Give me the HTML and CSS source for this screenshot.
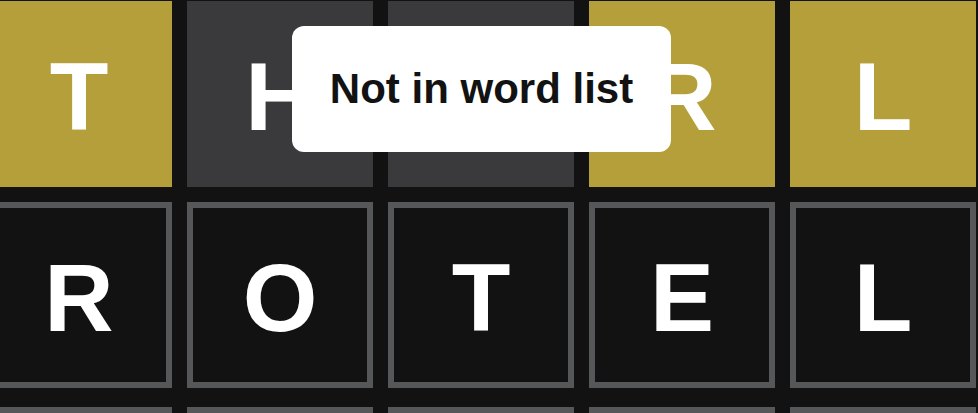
FILE: index.html
```html
<!DOCTYPE html>
<html lang="en">
  <head>
    <meta charset="UTF-8" />
    <meta name="viewport" content="width=device-width, initial-scale=1.0" />
    <title>Wordle</title>
    <link rel="stylesheet" href="styles.css">
  </head>
  <body>
    <div class="board">
      <div class="row">
        <div class="tile present">T</div>
        <div class="tile absent">H</div>
        <div class="tile absent">I</div>
        <div class="tile present">R</div>
        <div class="tile present">L</div>
      </div>
      <div class="row">
        <div class="tile tbd">R</div>
        <div class="tile tbd">O</div>
        <div class="tile tbd">T</div>
        <div class="tile tbd">E</div>
        <div class="tile tbd">L</div>
      </div>
      <div class="row rowNext">
        <div class="tile empty"></div>
        <div class="tile empty"></div>
        <div class="tile empty"></div>
        <div class="tile empty"></div>
        <div class="tile empty"></div>
      </div>
    </div>
    <div class="toast">Not in word list</div>
  </body>
</html>
```

FILE: styles.css
```css
body {
  margin: 0;
  background-color: #121213;
  overflow: hidden;
  font-family: "Liberation Sans", Arial, sans-serif;
}
.board {
  display: flex;
  flex-direction: column;
  gap: 15px;
  margin-left: -14px;
  padding-top: 1px;
}
.row {
  display: grid;
  grid-template-columns: repeat(5, 186px);
  column-gap: 15px;
}
.row.rowNext {
  margin-top: 4px;
}
.tile {
  box-sizing: border-box;
  height: 186px;
  display: flex;
  align-items: center;
  justify-content: center;
  padding-top: 5px;
  color: #ffffff;
  font-size: 96px;
  font-weight: 700;
  text-transform: uppercase;
}
.tile.present {
  background-color: #b59f3b;
}
.tile.absent {
  background-color: #3a3a3c;
}
.tile.tbd,
.tile.empty {
  border: 6px solid #565758;
  background-color: #121213;
}
.toast {
  position: absolute;
  left: 292px;
  top: 26px;
  width: 379px;
  box-sizing: border-box;
  padding: 39px 0;
  line-height: 48px;
  border-radius: 12px;
  background-color: #ffffff;
  color: #121213;
  font-size: 42px;
  font-weight: 700;
  text-align: center;
}
```
